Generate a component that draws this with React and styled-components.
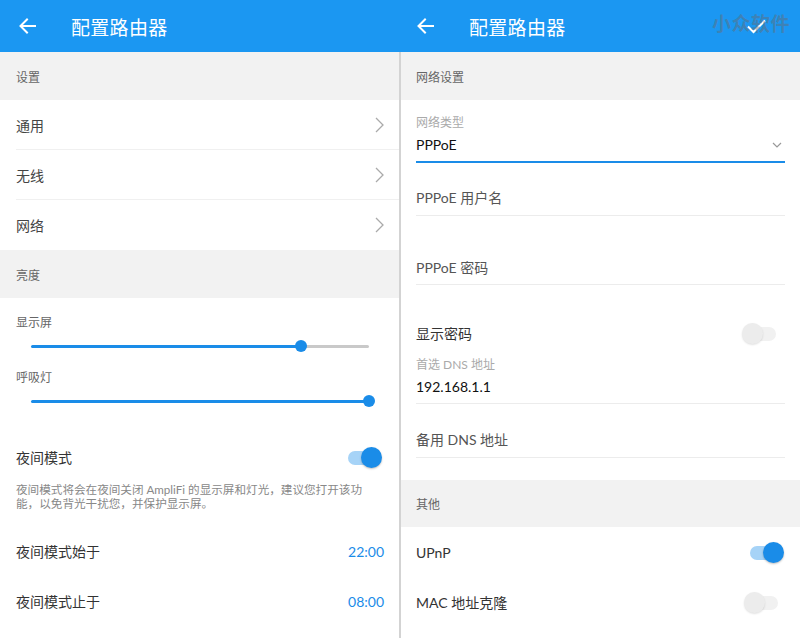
import React from 'react';
import styled, { createGlobalStyle } from 'styled-components';

const Global = createGlobalStyle`
  html, body { margin: 0; padding: 0; background: #fff; }
  body {
    font-family: Lato, "Noto Sans CJK SC", sans-serif;
    width: 800px; height: 638px; overflow: hidden;
    -webkit-font-smoothing: antialiased;
  }
`;

const Screen = styled.div`
  display: flex;
  width: 800px;
  height: 638px;
  overflow: hidden;
  background: #fff;
`;

const Panel = styled.div`
  width: ${p => p.$w}px;
  flex-shrink: 0;
  display: flex;
  flex-direction: column;
`;

const Header = styled.header`
  position: relative;
  height: 52px;
  flex-shrink: 0;
  background: #1b97f2;
  display: flex;
  align-items: center;
  padding: 0 ${p => p.$pr || 16}px 0 ${p => p.$pl || 19}px;
  color: #fff;
`;

const Title = styled.h1`
  margin: 0 0 0 35px;
  flex: 1;
  font-size: 19px;
  font-weight: 400;
  letter-spacing: 0.3px;
  line-height: 1;
  font-family: "Noto Sans CJK SC", sans-serif;
`;

const Watermark = styled.span`
  position: absolute;
  right: 10px;
  top: 9px;
  font-size: 19px;
  letter-spacing: 0.5px;
  color: rgba(105, 105, 105, 0.45);
  font-family: "Noto Sans CJK SC", sans-serif;
  font-weight: 700;
`;

const Body = styled.div`
  flex: 1;
  display: flex;
  flex-direction: column;
  background: #fff;
  border-left: ${p => (p.$divider ? '2px solid #d3d3d3' : 'none')};
`;

const Section = styled.div`
  height: ${p => p.$h || 48}px;
  margin-top: ${p => p.$mt || 0}px;
  flex-shrink: 0;
  background: #f2f2f2;
  display: flex;
  align-items: center;
  padding-left: ${p => p.$pl || 16}px;
  font-size: 12px;
  color: #666;
`;

const NavRow = styled.div`
  height: 50px;
  margin-left: 16px;
  padding-right: 15px;
  display: flex;
  align-items: center;
  justify-content: space-between;
  font-size: 14px;
  color: #444;
  border-bottom: 1px solid ${p => (p.$last ? 'transparent' : '#f0f0f0')};
  box-sizing: border-box;
`;

const SliderLabel = styled.div`
  margin: ${p => p.$mt}px 0 0 16px;
  font-size: 12px;
  line-height: 16px;
  color: #666;
`;

const SliderBox = styled.div`
  position: relative;
  height: 20px;
  margin: 5px 30px 0 31px;
  display: flex;
  align-items: center;
`;

const SliderLine = styled.div`
  width: 100%;
  height: 3px;
  border-radius: 2px;
`;

const SliderThumb = styled.div`
  position: absolute;
  top: 50%;
  width: 12px;
  height: 12px;
  margin: -6px 0 0 -6px;
  border-radius: 50%;
  background: #1a8ce8;
`;

const Row = styled.div`
  height: ${p => p.$h || 50}px;
  margin-top: ${p => p.$mt || 0}px;
  padding: 0 ${p => p.$pr || 15}px 0 ${p => p.$pl || 16}px;
  flex-shrink: 0;
  display: flex;
  align-items: center;
  justify-content: space-between;
  font-size: 14px;
  color: #333;
`;

const TimeValue = styled.span`
  color: #1a8ce8;
  font-size: 14px;
`;

const Desc = styled.p`
  margin: 1px 0 0;
  padding: 0 16px;
  font-size: 11.6px;
  line-height: 14px;
  color: #888;
`;

const ToggleBox = styled.div`
  position: relative;
  width: 40px;
  height: 21px;
  flex-shrink: 0;
`;

const ToggleTrack = styled.div`
  position: absolute;
  left: 6px;
  top: 4px;
  width: 28px;
  height: 14px;
  border-radius: 7px;
  background: ${p => (p.$on ? '#a6d3f7' : '#f1f1f1')};
`;

const ToggleThumb = styled.div`
  position: absolute;
  top: 0;
  left: ${p => (p.$on ? 19 : 0)}px;
  width: 21px;
  height: 21px;
  border-radius: 50%;
  background: ${p => (p.$on ? '#1a8ce8' : '#ececec')};
  box-shadow: 0 1px 2px rgba(0, 0, 0, ${p => (p.$on ? 0.25 : 0.12)});
`;

const FieldGroup = styled.div`
  padding: 0 15px;
  display: flex;
  flex-direction: column;
`;

const FieldLabel = styled.div`
  margin-top: ${p => p.$mt}px;
  font-size: 12px;
  line-height: 16px;
  color: #aaa;
`;

const FieldInput = styled.div`
  margin-top: ${p => p.$mt}px;
  padding-bottom: ${p => p.$pb}px;
  line-height: 20px;
  font-size: 14px;
  color: ${p => (p.$value ? '#111' : '#555')};
  border-bottom: ${p => (p.$active ? '2px solid #1a8ce8' : '1px solid #ececec')};
  display: flex;
  align-items: center;
  justify-content: space-between;
`;

const FieldRow = styled.div`
  margin-top: ${p => p.$mt}px;
  height: 36px;
  display: flex;
  align-items: center;
  justify-content: space-between;
  font-size: 14px;
  color: #333;
  padding-right: 3px;
`;

const BackIcon = () => (
  <svg width="17" height="16" viewBox="0 0 17 16" fill="none" stroke="#fff" strokeWidth="2" strokeLinecap="square">
    <path d="M16 8H2" />
    <path d="M8 1.5L1.5 8L8 14.5" />
  </svg>
);

const CheckIcon = () => (
  <svg width="19" height="15" viewBox="0 0 19 15" fill="none" stroke="#fff" strokeWidth="2">
    <path d="M1 7.5l5.5 5.5L18 1.5" />
  </svg>
);

const Chevron = () => (
  <svg width="9" height="16" viewBox="0 0 9 16" fill="none" stroke="#aaa" strokeWidth="1.3">
    <path d="M1 1l7 7-7 7" />
  </svg>
);

const DropChevron = () => (
  <svg width="10" height="6" viewBox="0 0 10 6" fill="none" stroke="#999" strokeWidth="1.2" style={{ marginRight: 3 }}>
    <path d="M1 1l4 4 4-4" />
  </svg>
);

const Slider = ({ value }) => (
  <SliderBox>
    <SliderLine
      style={{
        background: `linear-gradient(to right, #1a8ce8 ${value}%, #c9c9c9 ${value}%)`,
      }}
    />
    <SliderThumb style={{ left: `${value}%` }} />
  </SliderBox>
);

const Toggle = ({ on }) => (
  <ToggleBox>
    <ToggleTrack $on={on} />
    <ToggleThumb $on={on} />
  </ToggleBox>
);

export default function App() {
  return (
    <>
      <Global />
      <Screen>
        <Panel $w={399}>
          <Header>
            <BackIcon />
            <Title>配置路由器</Title>
          </Header>
          <Body>
            <Section>设置</Section>
            <NavRow>通用<Chevron /></NavRow>
            <NavRow>无线<Chevron /></NavRow>
            <NavRow $last>网络<Chevron /></NavRow>
            <Section>亮度</Section>
            <SliderLabel $mt={17}>显示屏</SliderLabel>
            <Slider value={80} />
            <SliderLabel $mt={14}>呼吸灯</SliderLabel>
            <Slider value={100} />
            <Row $mt={21} $pr={17}>
              夜间模式
              <Toggle on />
            </Row>
            <Desc>
              夜间模式将会在夜间关闭 AmpliFi 的显示屏和灯光，建议您打开该功
              <br />
              能，以免背光干扰您，并保护显示屏。
            </Desc>
            <Row $mt={15}>
              夜间模式始于
              <TimeValue>22:00</TimeValue>
            </Row>
            <Row>
              夜间模式止于
              <TimeValue>08:00</TimeValue>
            </Row>
          </Body>
        </Panel>
        <Panel $w={401}>
          <Header $pl={18} $pr={34}>
            <BackIcon />
            <Title>配置路由器</Title>
            <CheckIcon />
            <Watermark>小众软件</Watermark>
          </Header>
          <Body $divider>
            <Section $pl={15}>网络设置</Section>
            <FieldGroup>
              <FieldLabel $mt={15}>网络类型</FieldLabel>
              <FieldInput $mt={4} $pb={6} $active $value>
                PPPoE
                <DropChevron />
              </FieldInput>
              <FieldInput $mt={25} $pb={7}>PPPoE 用户名</FieldInput>
              <FieldInput $mt={42} $pb={6}>PPPoE 密码</FieldInput>
              <FieldRow $mt={30}>
                显示密码
                <Toggle />
              </FieldRow>
              <FieldLabel $mt={6}>首选 DNS 地址</FieldLabel>
              <FieldInput $mt={4} $pb={6} $value>192.168.1.1</FieldInput>
              <FieldInput $mt={26} $pb={7}>备用 DNS 地址</FieldInput>
            </FieldGroup>
            <Section $mt={22} $h={47} $pl={15}>其他</Section>
            <Row $pl={15} $pr={16}>
              UPnP
              <Toggle on />
            </Row>
            <Row $pl={15} $pr={16}>
              MAC 地址克隆
              <Toggle />
            </Row>
          </Body>
        </Panel>
      </Screen>
    </>
  );
}
